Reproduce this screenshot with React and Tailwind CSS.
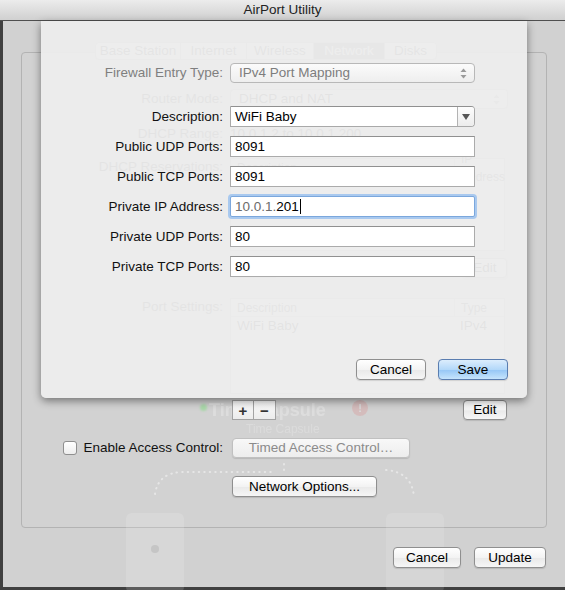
import clsx from "clsx";

const btnBase =
  "relative flex items-center justify-center rounded-[4px] border text-[13.5px] leading-none shadow-[0_1px_1px_rgba(0,0,0,0.12)]";

function AquaButton({ children, className = "", disabled, primary }) {
  return (
    <button
      className={clsx(
        btnBase,
        primary
          ? "border-[#5a7db0] bg-[linear-gradient(to_bottom,#dcedfd,#b3d8f9_50%,#98c8f6_55%,#c6e4fc)] text-black"
          : disabled
          ? "border-[#c0c0c0] bg-[linear-gradient(to_bottom,#f8f8f8,#ededed)] text-[#8b8b8b]"
          : "border-[#8f8f8f] bg-[linear-gradient(to_bottom,#ffffff,#f3f3f3_50%,#eaeaea_55%,#f6f6f6)] text-black",
        className
      )}
    >
      {children}
    </button>
  );
}

function PlusMinus() {
  return (
    <div className="relative flex h-[20px] w-[44px] border border-[#a3a3a3] bg-[linear-gradient(to_bottom,#fafafa,#ececec)] text-[15px] font-bold leading-none text-[#333]">
      <div className="flex w-[21px] items-center justify-center border-r border-[#a3a3a3]">+</div>
      <div className="flex flex-1 items-center justify-center">−</div>
    </div>
  );
}

function UpDown() {
  return (
    <svg width="7" height="11" viewBox="0 0 7 11" className="shrink-0">
      <path d="M0.5 4 L3.5 0.5 L6.5 4 Z" fill="#9a9a9a" />
      <path d="M0.5 7 L3.5 10.5 L6.5 7 Z" fill="#9a9a9a" />
    </svg>
  );
}

function Field({ children, focused }) {
  return (
    <div
      className={clsx(
        "flex h-[21px] w-[245px] items-center border bg-white pl-[4px] text-[13.5px] text-black",
        focused
          ? "rounded-[2px] border-[#7ba7dc] shadow-[0_0_0_2px_#a9c9ef]"
          : "border-[#ababab] border-t-[#909090]"
      )}
    >
      {children}
    </div>
  );
}

function SheetRow({ label, children, className = "", muted }) {
  return (
    <div className={clsx("flex items-center", className)}>
      <div
        className={clsx(
          "w-[182px] text-right text-[13.5px]",
          muted ? "text-[#7f7f7f]" : "text-[#111]"
        )}
      >
        {label}
      </div>
      <div className="ml-[7px]">{children}</div>
    </div>
  );
}

function WinRow({ label, children, className = "", top }) {
  return (
    <div className={clsx("flex", top ? "items-start" : "items-center", className)}>
      <div className="w-[201px] text-right text-[13.5px] leading-[18px] text-[#111]">{label}</div>
      <div className="ml-[7px] w-[278px]">{children}</div>
    </div>
  );
}

function Table({ cols, rows, bodyH }) {
  return (
    <div className="w-[275px] border border-[#b5b5b5] bg-white text-[12px]">
      <div className="flex h-[18px] items-center border-b border-[#c4c4c4] bg-[linear-gradient(to_bottom,#fbfbfb,#e9e9e9)] text-[#333]">
        <div className="flex-1 pl-[6px]">{cols[0]}</div>
        <div className="w-[50px] border-l border-[#d0d0d0] pl-[6px]">{cols[1]}</div>
      </div>
      <div className={clsx("flex flex-col overflow-hidden", bodyH)}>
        {rows.map((r, i) => (
          <div key={i} className="flex h-[19px] shrink-0 items-center border-b border-[#ededed] text-[13.5px]">
            <div className="flex-1 pl-[6px]">{r[0]}</div>
            <div className="w-[50px] pl-[6px]">{r[1]}</div>
          </div>
        ))}
      </div>
    </div>
  );
}

export default function App() {
  return (
    <div className="relative h-[590px] w-[565px] overflow-hidden bg-[#3d3d3d] font-['Liberation_Sans',Arial,sans-serif]">
      {/* title bar */}
      <div className="h-[21px] border-b border-[#4f4f4f] bg-[linear-gradient(to_bottom,#ececec,#d0d0d0)] text-center text-[13.5px] leading-[20px] text-[#222]">
        AirPort Utility
      </div>

      {/* diagram showing through the settings panel */}
      <div className="absolute left-[200px] top-[404px] h-[7px] w-[7px] rounded-full bg-[#8fdc8f] opacity-60 blur-[1px]" />
      <div className="absolute left-[209px] top-[397px] text-[18px] font-bold text-white opacity-25">
        Time Capsule
      </div>
      <div className="absolute left-[352px] top-[400px] flex h-[16px] w-[16px] items-center justify-center rounded-full bg-[#e06a6a] text-[11px] font-bold text-white opacity-20">
        !
      </div>
      <div className="absolute left-[246px] top-[420px] text-[12px] text-white opacity-20">
        Time Capsule
      </div>
      <svg className="absolute left-0 top-0" width="565" height="590">
        <path
          d="M155 494 Q158 473 182 472 L272 472 M284 470 L284 462 M386 470 Q412 472 414 497"
          fill="none"
          stroke="#ffffff"
          strokeOpacity="0.45"
          strokeWidth="2"
          strokeDasharray="0.5 5"
          strokeLinecap="round"
        />
      </svg>
      <div className="absolute left-[126px] top-[513px] h-[80px] w-[58px] rounded-[6px] bg-white/15">
        <div className="mx-auto mt-[32px] h-[8px] w-[8px] rounded-full bg-[#9a9a9a]/30" />
      </div>
      <div className="absolute left-[386px] top-[513px] h-[80px] w-[58px] rounded-[6px] bg-white/12" />

      {/* settings window */}
      <div className="h-[569px] border-b-[3px] border-l-[3px] border-[#404040] bg-[#d9d9d9]/95 px-[18px] pt-[31px]">
        <div className="flex h-[476px] w-[526px] flex-col rounded-[4px] border border-[#b3b3b3] bg-[#d2d2d2]/80">
          {/* tabs */}
          <div className="relative -mt-[11px] ml-[73px] flex h-[18px] w-[342px] overflow-hidden rounded-[4px] border border-[#a8a8a8] bg-[linear-gradient(to_bottom,#fdfdfd,#ececec)] text-[13.5px] leading-[16px] text-[#222]">
            <div className="w-[85px] border-r border-[#b8b8b8] text-center">Base Station</div>
            <div className="w-[66px] border-r border-[#b8b8b8] text-center">Internet</div>
            <div className="w-[67px] border-r border-[#b8b8b8] text-center">Wireless</div>
            <div className="w-[71px] border-r border-[#b8b8b8] bg-[#6e6e6e] text-center text-white">Network</div>
            <div className="flex-1 text-center">Disks</div>
          </div>

          <WinRow label="Router Mode:" className="mt-[29px] h-[20px]">
            <div className="relative flex h-[20px] items-center justify-between rounded-[4px] border border-[#a6a6a6] bg-[linear-gradient(to_bottom,#ffffff,#ececec)] pl-[8px] pr-[7px] text-[13.5px]">
              DHCP and NAT
              <UpDown />
            </div>
          </WinRow>
          <WinRow label="DHCP Range:" className="mt-[17px] h-[16px]">
            <div className="text-[13.5px] leading-[16px]">10.0.1.2 to 10.0.1.200</div>
          </WinRow>
          <WinRow label="DHCP Reservations:" className="mt-[16px] h-[94px]" top>
            <Table cols={["Description", "IP Address"]} rows={[]} bodyH="h-[73px]" />
          </WinRow>
          <WinRow label="" className="mt-[6px] h-[20px]">
            <div className="flex justify-between pl-[2px] pr-[1px]">
              <PlusMinus />
              <AquaButton className="h-[20px] w-[44px]">Edit</AquaButton>
            </div>
          </WinRow>
          <WinRow label="Port Settings:" className="mt-[20px] h-[97px]" top>
            <Table
              cols={["Description", "Type"]}
              rows={[["WiFi Baby", "IPv4"], ["", ""], ["", ""], ["", ""]]}
              bodyH="h-[76px]"
            />
          </WinRow>
          <WinRow label="" className="mt-[5px] h-[20px]">
            <div className="flex justify-between pl-[2px] pr-[1px]">
              <PlusMinus />
              <AquaButton className="h-[20px] w-[44px]">Edit</AquaButton>
            </div>
          </WinRow>
          <WinRow
            className="mt-[18px] h-[20px]"
            label={
              <div className="flex items-center justify-end gap-[6px]">
                <div className="relative h-[14px] w-[14px] rounded-[3px] border border-[#8f8f8f] bg-[linear-gradient(to_bottom,#ffffff,#ededed)]" />
                <span>Enable Access Control:</span>
              </div>
            }
          >
            <AquaButton disabled className="ml-[2px] h-[20px] w-[178px]">
              Timed Access Control…
            </AquaButton>
          </WinRow>
          <WinRow label="" className="mt-[18px] h-[21px]">
            <AquaButton className="ml-[2px] h-[21px] w-[145px]">Network Options...</AquaButton>
          </WinRow>
        </div>

        <div className="mt-[19px] flex w-[526px] justify-end gap-[13px] pr-[1px]">
          <AquaButton className="h-[21px] w-[68px]">Cancel</AquaButton>
          <AquaButton className="h-[21px] w-[72px]">Update</AquaButton>
        </div>
      </div>

      {/* sheet */}
      <div className="absolute left-[41px] top-[21px] flex h-[377px] w-[486px] flex-col rounded-b-[5px] bg-[#ececec]/[0.96] shadow-[0_3px_8px_rgba(0,0,0,0.45)]">
        <SheetRow label="Firewall Entry Type:" className="mt-[42px]" muted>
          <div className="flex h-[20px] w-[245px] items-center justify-between rounded-[4px] border border-[#b8b8b8] bg-[linear-gradient(to_bottom,#fbfbfb,#eeeeee)] pl-[8px] pr-[7px] text-[13.5px] text-[#7d7d7d]">
            IPv4 Port Mapping
            <UpDown />
          </div>
        </SheetRow>
        <SheetRow label="Description:" className="mt-[23px]">
          <div className="flex h-[21px] w-[245px] overflow-hidden rounded-r-[4px] border border-[#a9a9a9] border-t-[#909090] bg-white text-[13.5px]">
            <div className="flex flex-1 items-center pl-[4px]">WiFi Baby</div>
            <div className="flex w-[17px] items-center justify-center border-l border-[#b3b3b3] bg-[linear-gradient(to_bottom,#fdfdfd,#ececec)]">
              <svg width="8" height="6" viewBox="0 0 8 6">
                <path d="M0 0 L8 0 L4 6 Z" fill="#555" />
              </svg>
            </div>
          </div>
        </SheetRow>
        <SheetRow label="Public UDP Ports:" className="mt-[9px]">
          <Field>8091</Field>
        </SheetRow>
        <SheetRow label="Public TCP Ports:" className="mt-[9px]">
          <Field>8091</Field>
        </SheetRow>
        <SheetRow label="Private IP Address:" className="mt-[9px]">
          <Field focused>
            <span className="text-[#6b6b6b]">10.0.1.</span>
            <span>201</span>
            <span className="ml-[1px] inline-block h-[15px] w-[1px] bg-black" />
          </Field>
        </SheetRow>
        <SheetRow label="Private UDP Ports:" className="mt-[9px]">
          <Field>80</Field>
        </SheetRow>
        <SheetRow label="Private TCP Ports:" className="mt-[9px]">
          <Field>80</Field>
        </SheetRow>

        <div className="mt-[82px] flex justify-end gap-[12px] pr-[19px]">
          <AquaButton className="h-[21px] w-[70px]">Cancel</AquaButton>
          <AquaButton primary className="h-[21px] w-[70px]">Save</AquaButton>
        </div>
      </div>
    </div>
  );
}
